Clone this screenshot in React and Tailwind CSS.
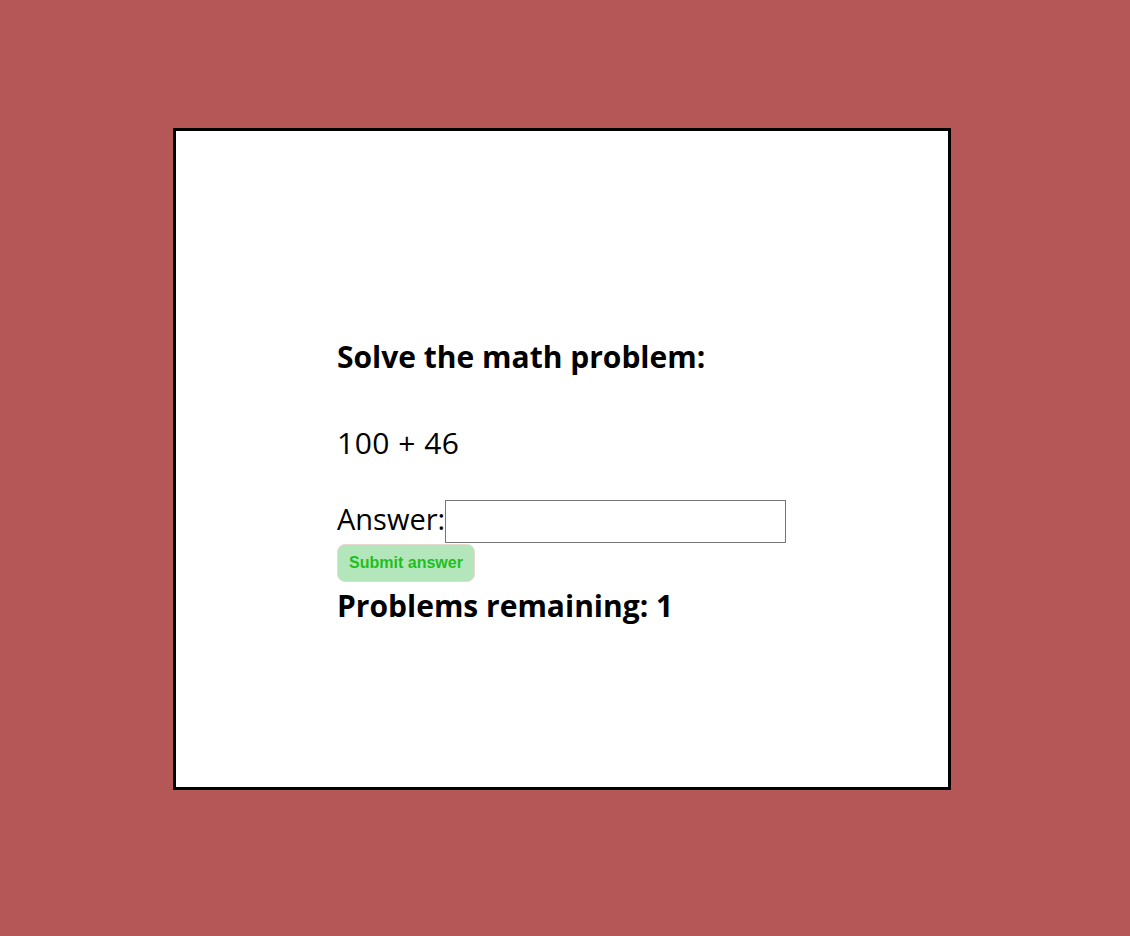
export default function App() {
  return (
    <div className="min-h-[936px] w-full bg-[#b55757] pt-[128px] pl-[173px]">
      <div className="w-[778px] h-[662px] border-[3px] border-black bg-white pl-[161px] pt-[206px] font-['Open_Sans',sans-serif] text-black">
        <h2 className="text-[30px] font-bold leading-[40px]">Solve the math problem:</h2>
        <p className="mt-[46px] text-[30px] leading-[40px] tracking-[0.5px]">100 + 46</p>
        <div className="mt-[37px] flex h-[43px] items-start">
          <label className="text-[29px] leading-[38px]">Answer:</label>
          <input
            type="text"
            className="h-[43px] w-[341px] border border-[#767676] outline-none"
          />
        </div>
        <button className="mt-[1px] h-[38px] w-[138px] rounded-[8px] border border-[#e6d9d0] bg-[#b3e6bb] font-['Liberation_Sans',sans-serif] text-[16px] font-bold text-[#20c020]">
          Submit answer
        </button>
        <h2 className="mt-[4px] text-[30px] font-bold leading-[40px]">Problems remaining: 1</h2>
      </div>
    </div>
  );
}
